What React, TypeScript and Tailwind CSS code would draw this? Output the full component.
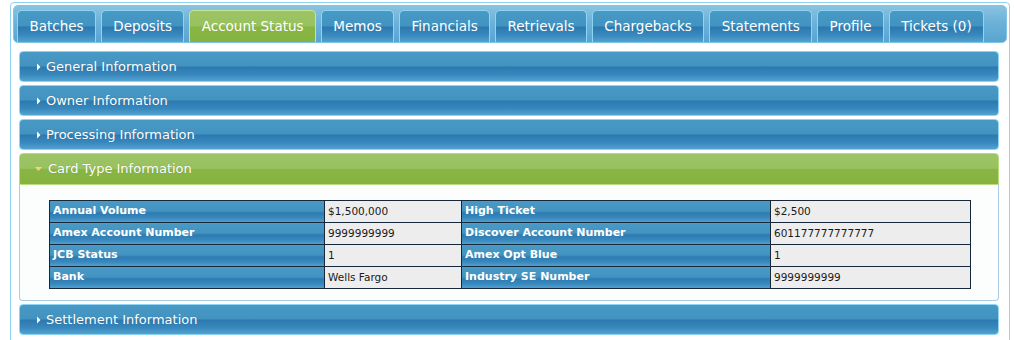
import React from 'react';

const tabs = ['Batches', 'Deposits', 'Account Status', 'Memos', 'Financials', 'Retrievals', 'Chargebacks', 'Statements', 'Profile', 'Tickets (0)'];

const rows = [
  ['Annual Volume', '$1,500,000', 'High Ticket', '$2,500'],
  ['Amex Account Number', '9999999999', 'Discover Account Number', '601177777777777'],
  ['JCB Status', '1', 'Amex Opt Blue', '1'],
  ['Bank', 'Wells Fargo', 'Industry SE Number', '9999999999'],
];

const blueGrad =
  'bg-[linear-gradient(to_bottom,#4899c5_0%,#4393c0_48%,#2c79b0_52%,#3888bd_78%,#52a3d0_100%)]';
const greenGrad =
  'bg-[linear-gradient(to_bottom,#9dc466_0%,#98c15f_48%,#88b543_52%,#86b340_100%)]';

const Arrow = ({ open }: { open?: boolean }) =>
  open ? (
    <svg width="8" height="8" viewBox="0 0 8 8" className="mr-[5px]">
      <path d="M0 2h7L3.5 6z" fill="#f2d77a" />
    </svg>
  ) : (
    <svg width="8" height="8" viewBox="0 0 8 8" className="mr-[3px]">
      <path d="M2 0.5v7L5.5 4z" fill="#ffffff" />
    </svg>
  );

const Header = ({ title, open }: { title: string; open?: boolean }) => (
  <div
    className={`flex items-center pl-[15px] text-white text-[13px] border ${
      open
        ? `${greenGrad} h-[32px] border-[#b9dc7e] rounded-t-[4px]`
        : `${blueGrad} h-[31px] border-[#8dd5f4] rounded-[4px]`
    }`}
  >
    <Arrow open={open} />
    <span className="[text-shadow:0_0_1px_rgba(0,0,0,0.2)]">{title}</span>
  </div>
);

export default function App() {
  return (
    <div className="w-[1014px] h-[340px] bg-white overflow-hidden font-['DejaVu_Sans',Verdana,sans-serif]">
      <div className="ml-[10px] mt-[2px] w-[1000px] h-[360px] border border-[#8fd3f2] rounded-[4px] p-[2px] bg-white">
        <div className="flex gap-[5px] h-[38px] pt-[4px] pl-[3px] rounded-[5px] border border-[#7fc4e6] bg-[linear-gradient(to_bottom,#8ac3df_0%,#6cb2d9_45%,#58a5d1_100%)]">
          {tabs.map((t) => (
            <div
              key={t}
              className={`h-[32px] px-[11.4px] flex items-center text-[13.5px] text-white rounded-t-[5px] border border-b-0 ${
                t === 'Account Status'
                  ? `${greenGrad} border-[#c6e58f]`
                  : `${blueGrad} border-[#8dd5f4]`
              }`}
            >
              {t}
            </div>
          ))}
        </div>
        <div className="pl-[6px] pr-[8px] pt-[8px] flex flex-col gap-[3px]">
          <Header title="General Information" />
          <Header title="Owner Information" />
          <Header title="Processing Information" />
          <div>
            <Header title="Card Type Information" open />
            <div className="border border-t-0 border-[#a9cde6] rounded-b-[4px] bg-[#fcfdfd] px-[29px] pt-[15px] pb-[11px]">
              <table className="w-full border-collapse text-[11px] table-fixed">
                <colgroup>
                  <col className="w-[275px]" />
                  <col className="w-[137px]" />
                  <col className="w-[309px]" />
                  <col className="w-[200px]" />
                </colgroup>
                <tbody>
                  {rows.map((r) => (
                    <tr key={r[0]} className="h-[22px]">
                      <td className={`${blueGrad} border border-[#17283a] px-[3px] text-white font-bold`}>{r[0]}</td>
                      <td className="bg-[#ededed] border border-[#17283a] px-[3px] text-[#1a1a1a] text-[10.5px]">{r[1]}</td>
                      <td className={`${blueGrad} border border-[#17283a] px-[3px] text-white font-bold`}>{r[2]}</td>
                      <td className="bg-[#ededed] border border-[#17283a] px-[3px] text-[#1a1a1a] text-[10.5px]">{r[3]}</td>
                    </tr>
                  ))}
                </tbody>
              </table>
            </div>
          </div>
          <div>
            <Header title="Settlement Information" />
          </div>
        </div>
      </div>
    </div>
  );
}
